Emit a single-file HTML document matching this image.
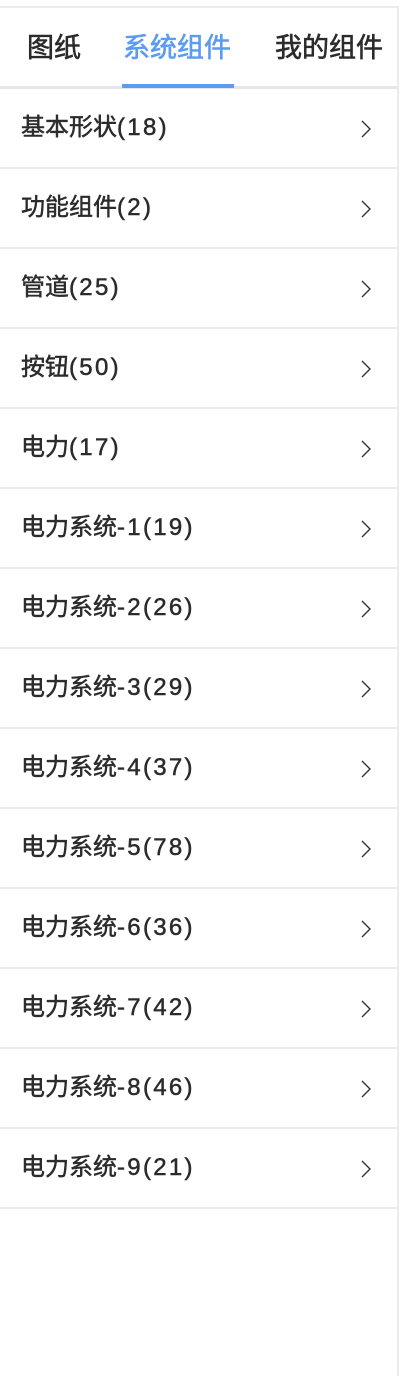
<!DOCTYPE html>
<html><head><meta charset="utf-8"><style>
body{margin:0;width:400px;height:1374px;background:#fff;font-family:"Liberation Sans","Noto Sans CJK SC",sans-serif;position:relative;overflow:hidden}
.wrap{position:absolute;left:0;top:6px;width:397px;height:1368px;border-top:2px solid #ebebef;border-right:2px solid #ebebef}
.tabs{height:78px;position:relative;border-bottom:3px solid #e6e6ea}
.tab{position:absolute;top:0;line-height:80px;font-size:27px;font-weight:normal;-webkit-text-stroke:0.6px currentColor;color:#2b2b2b}
.tab.a{color:#5b9bf0}
.ul{position:absolute;left:122px;width:112px;top:76px;height:4px;background:#5b9bf0}
.item{height:78px;border-bottom:2px solid #ebebef;position:relative;font-size:24px;-webkit-text-stroke:0.5px currentColor;color:#2b2b2b;line-height:78px;padding-left:21px}
.item i{font-style:normal;letter-spacing:2.3px}
.item svg{position:absolute;right:25px;top:30px}
</style></head><body><div class="wrap">
<div class="tabs"><span class="tab" style="left:27px">图纸</span><span class="tab a" style="left:123px">系统组件</span><span class="tab" style="left:275px">我的组件</span><div class="ul"></div></div>
<div class="item">基本形状<i>(18)</i><svg width="12" height="20"><path d="M2 2L10 10L2 18" fill="none" stroke="#333" stroke-width="1.4"/></svg></div>
<div class="item">功能组件<i>(2)</i><svg width="12" height="20"><path d="M2 2L10 10L2 18" fill="none" stroke="#333" stroke-width="1.4"/></svg></div>
<div class="item">管道<i>(25)</i><svg width="12" height="20"><path d="M2 2L10 10L2 18" fill="none" stroke="#333" stroke-width="1.4"/></svg></div>
<div class="item">按钮<i>(50)</i><svg width="12" height="20"><path d="M2 2L10 10L2 18" fill="none" stroke="#333" stroke-width="1.4"/></svg></div>
<div class="item">电力<i>(17)</i><svg width="12" height="20"><path d="M2 2L10 10L2 18" fill="none" stroke="#333" stroke-width="1.4"/></svg></div>
<div class="item">电力系统<i>-1(19)</i><svg width="12" height="20"><path d="M2 2L10 10L2 18" fill="none" stroke="#333" stroke-width="1.4"/></svg></div>
<div class="item">电力系统<i>-2(26)</i><svg width="12" height="20"><path d="M2 2L10 10L2 18" fill="none" stroke="#333" stroke-width="1.4"/></svg></div>
<div class="item">电力系统<i>-3(29)</i><svg width="12" height="20"><path d="M2 2L10 10L2 18" fill="none" stroke="#333" stroke-width="1.4"/></svg></div>
<div class="item">电力系统<i>-4(37)</i><svg width="12" height="20"><path d="M2 2L10 10L2 18" fill="none" stroke="#333" stroke-width="1.4"/></svg></div>
<div class="item">电力系统<i>-5(78)</i><svg width="12" height="20"><path d="M2 2L10 10L2 18" fill="none" stroke="#333" stroke-width="1.4"/></svg></div>
<div class="item">电力系统<i>-6(36)</i><svg width="12" height="20"><path d="M2 2L10 10L2 18" fill="none" stroke="#333" stroke-width="1.4"/></svg></div>
<div class="item">电力系统<i>-7(42)</i><svg width="12" height="20"><path d="M2 2L10 10L2 18" fill="none" stroke="#333" stroke-width="1.4"/></svg></div>
<div class="item">电力系统<i>-8(46)</i><svg width="12" height="20"><path d="M2 2L10 10L2 18" fill="none" stroke="#333" stroke-width="1.4"/></svg></div>
<div class="item">电力系统<i>-9(21)</i><svg width="12" height="20"><path d="M2 2L10 10L2 18" fill="none" stroke="#333" stroke-width="1.4"/></svg></div>
</div></body></html>
